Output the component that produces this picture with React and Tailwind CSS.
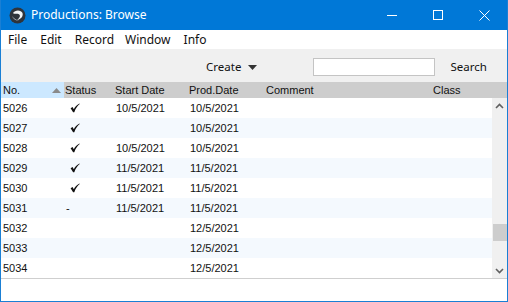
import React from 'react';

const rows = [
  { no: '5026', status: 'check', start: '10/5/2021', prod: '10/5/2021' },
  { no: '5027', status: 'check', start: '', prod: '10/5/2021' },
  { no: '5028', status: 'check', start: '10/5/2021', prod: '10/5/2021' },
  { no: '5029', status: 'check', start: '11/5/2021', prod: '11/5/2021' },
  { no: '5030', status: 'check', start: '11/5/2021', prod: '11/5/2021' },
  { no: '5031', status: 'dash', start: '11/5/2021', prod: '11/5/2021' },
  { no: '5032', status: '', start: '', prod: '12/5/2021' },
  { no: '5033', status: '', start: '', prod: '12/5/2021' },
  { no: '5034', status: '', start: '', prod: '12/5/2021' },
];

const Check = () => (
  <svg width="10" height="10" viewBox="0 0 10 10" className="ml-[5px]">
    <path d="M0.6 5.2 L2.6 4 L3.8 6.2 C5 3.8 6.8 1.8 9.4 0.4 L9.7 1.1 C7.4 3 5.6 5.6 4.3 9.2 L3.1 9.2 Z" fill="#111" />
  </svg>
);

const AppLogo = () => (
  <svg width="17" height="17" viewBox="0 0 17 17">
    <circle cx="8.5" cy="8.5" r="8" fill="#2f343b" />
    <path d="M4 6 C6 2.5 12 2.5 13.5 6 C14.5 9 12 12.5 8 13 C11 11 12 8 9.5 7 C7.5 6.3 5.5 7.5 4 6 Z" fill="#f2f4f6" />
    <path d="M3 9 C4 12 7 14 10 13.5 C7 13 5 11.5 3 9 Z" fill="#c9ced4" />
  </svg>
);

export default function App() {
  return (
    <div
      className="w-[508px] h-[302px] flex flex-col bg-white border-x border-b border-[#1a7fd4] overflow-hidden text-[#111]"
      style={{ fontFamily: '"Segoe UI", "Noto Sans", sans-serif' }}
    >
      {/* title bar */}
      <div className="h-[30px] shrink-0 bg-[#0078d7] flex items-center text-white">
        <div className="ml-[8px] flex items-center">
          <AppLogo />
        </div>
        <span className="ml-[5px] text-[12px]">Productions: Browse</span>
        <div className="ml-auto flex items-center h-full">
          <div className="w-[46px] h-full flex items-center justify-center">
            <div className="w-[10px] h-px bg-white" />
          </div>
          <div className="w-[46px] h-full flex items-center justify-center">
            <div className="w-[10px] h-[10px] border border-white" />
          </div>
          <div className="w-[46px] h-full flex items-center justify-center">
            <svg width="11" height="11" viewBox="0 0 11 11">
              <path d="M0.5 0.5 L10.5 10.5 M10.5 0.5 L0.5 10.5" stroke="white" strokeWidth="1" />
            </svg>
          </div>
        </div>
      </div>

      {/* menu */}
      <div className="h-[19px] shrink-0 flex items-center text-[12px] pl-[7px]">
        <span>File</span>
        <span className="ml-[13px]">Edit</span>
        <span className="ml-[13px]">Record</span>
        <span className="ml-[11px]">Window</span>
        <span className="ml-[13px]">Info</span>
      </div>

      {/* toolbar */}
      <div className="h-[33px] shrink-0 bg-[#f0f0f0] flex items-center text-[12px] pt-[3px]">
        <span className="ml-[205px] text-[11.5px]">Create</span>
        <svg width="9" height="5" viewBox="0 0 9 5" className="ml-[7px]">
          <path d="M0 0 H9 L4.5 5 Z" fill="#333" />
        </svg>
        <div className="ml-[56px] w-[122px] h-[18px] bg-white border border-[#c4c4c4]" />
        <span className="ml-[15px] text-[11.5px]">Search</span>
      </div>

      {/* table */}
      <div style={{ fontFamily: '"Liberation Sans", Arial, sans-serif' }} className="text-[11px]">
        <div className="h-[16px] flex bg-[#cdcdcd]">
          <div className="w-[63px] bg-[#cce8ff] flex items-center pl-[2px]">
            <span>No.</span>
            <svg width="9" height="5" viewBox="0 0 9 5" className="ml-auto mr-[3px]">
              <path d="M0 5 H9 L4.5 0 Z" fill="#8a8a8a" />
            </svg>
          </div>
          <div className="w-[49px] flex items-center pl-[1px]">Status</div>
          <div className="w-[74px] flex items-center pl-[2px]">Start Date</div>
          <div className="w-[77px] flex items-center pl-[2px]">Prod.Date</div>
          <div className="w-[167px] flex items-center pl-[2px]">Comment</div>
          <div className="flex-1 flex items-center pl-[2px]">Class</div>
        </div>

        <div className="h-[180px] flex">
          <div className="flex-1">
            {rows.map((r, i) => (
              <div key={r.no} className={`h-[20px] flex items-center ${i % 2 ? 'bg-[#f4f9fe]' : 'bg-white'}`}>
                <div className="w-[63px] pl-[2px]">{r.no}</div>
                <div className="w-[49px] pl-[1px] flex items-center">
                  {r.status === 'check' && <Check />}
                  {r.status === 'dash' && <span className="ml-[1px]">-</span>}
                </div>
                <div className="w-[74px] pl-[3px]">{r.start}</div>
                <div className="w-[77px] pl-[3px]">{r.prod}</div>
              </div>
            ))}
          </div>
          <div className="w-[15px] bg-[#f0f0f0] flex flex-col items-center">
            <svg width="9" height="6" viewBox="0 0 9 6" className="mt-[5px]">
              <path d="M1 5 L4.5 1.5 L8 5" fill="none" stroke="#606060" strokeWidth="1.6" />
            </svg>
            <div className="mt-[115px] w-[14px] h-[17px] bg-[#cdcdcd]" />
            <svg width="9" height="6" viewBox="0 0 9 6" className="mt-[27px]">
              <path d="M1 1 L4.5 4.5 L8 1" fill="none" stroke="#606060" strokeWidth="1.6" />
            </svg>
          </div>
        </div>
        <div className="h-px bg-[#cfcfcf]" />
      </div>
    </div>
  );
}
